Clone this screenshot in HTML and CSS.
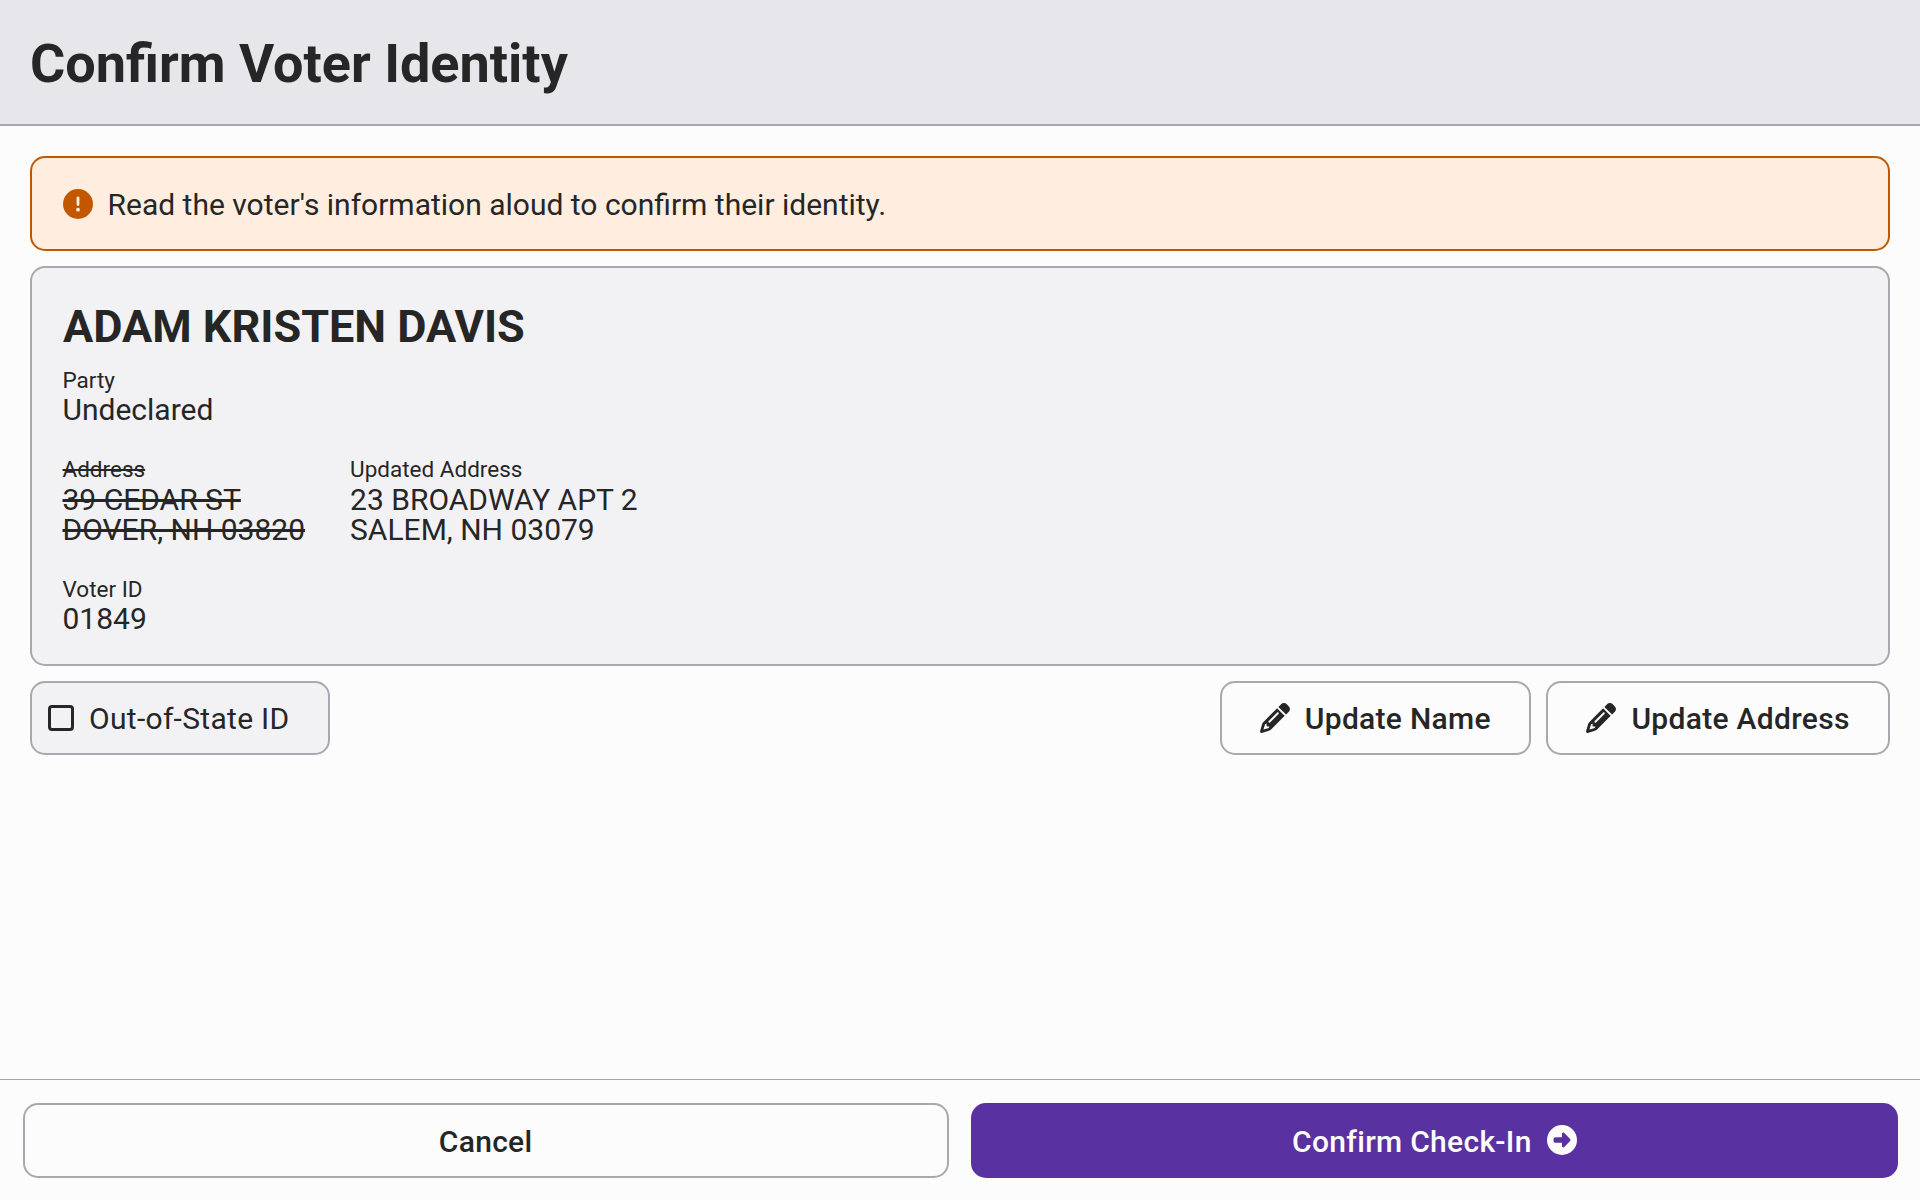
FILE: index.html
```html
<!DOCTYPE html>
<html lang="en">
<head>
<meta charset="utf-8">
<title>Confirm Voter Identity</title>
<link rel="stylesheet" href="styles.css">
</head>
<body>
<header class="header"><h1 class="title">Confirm Voter Identity</h1></header>
<main class="main">
  <div class="callout">
    <svg class="icon" viewBox="0 0 512 512"><path fill="currentColor" d="M256 512A256 256 0 1 0 256 0a256 256 0 1 0 0 512zm0-384c13.300 0 24 10.700 24 24V264c0 13.300-10.700 24-24 24s-24-10.700-24-24V152c0-13.300 10.700-24 24-24zM224 352a32 32 0 1 1 64 0 32 32 0 1 1-64 0z"/></svg>
    <span class="message">Read the voter's information aloud to confirm their identity.</span>
  </div>
  <section class="card">
    <h2 class="name">ADAM KRISTEN DAVIS</h2>
    <div class="details">
      <div class="field"><div class="label">Party</div><div>Undeclared</div></div>
      <div class="addresses">
        <div class="field"><div class="label"><s>Address</s></div><div><s>39 CEDAR ST</s></div><div><s>DOVER, NH 03820</s></div></div>
        <div class="field"><div class="label">Updated Address</div><div>23 BROADWAY APT 2</div><div>SALEM, NH 03079</div></div>
      </div>
      <div class="field"><div class="label">Voter ID</div><div>01849</div></div>
    </div>
  </section>
  <div class="actions">
    <button class="checkbox" role="checkbox" aria-checked="false"><span class="box"></span><span class="text">Out-of-State ID</span></button>
    <div class="updates">
      <button class="button"><svg class="icon" viewBox="0 0 512 512"><path fill="currentColor" d="M410.300 231l11.300-11.300-33.900-33.900-62.100-62.100L291.700 89.800l-11.300 11.300-22.600 22.600L58.600 322.900c-10.400 10.400-18 23.300-22.200 37.400L1 480.700c-2.500 8.400-.2 17.500 6.100 23.700s15.300 8.500 23.700 6.100l120.300-35.400c14.100-4.200 27-11.800 37.400-22.200L387.700 253.700 410.300 231zM160 399.400l-9.100 22.700c-4 3.100-8.500 5.400-13.300 6.900L59.400 452l23-78.100c1.400-4.900 3.800-9.400 6.900-13.300l22.700-9.100v32c0 8.800 7.200 16 16 16h32zM362.700 18.700L348.300 33.200 325.700 55.800 314.300 67.100l33.900 33.900 62.100 62.100 33.900 33.900 11.300-11.300 22.600-22.600 14.500-14.500c25-25 25-65.500 0-90.500L453.300 18.700c-25-25-65.500-25-90.500 0zm-47.400 168l-144 144c-6.200 6.200-16.400 6.200-22.600 0s-6.200-16.400 0-22.600l144-144c6.200-6.200 16.400-6.200 22.600 0s6.200 16.400 0 22.600z"/></svg><span class="text">Update Name</span></button>
      <button class="button"><svg class="icon" viewBox="0 0 512 512"><path fill="currentColor" d="M410.300 231l11.300-11.300-33.900-33.900-62.100-62.100L291.700 89.800l-11.300 11.300-22.600 22.600L58.600 322.900c-10.400 10.400-18 23.300-22.200 37.400L1 480.700c-2.500 8.400-.2 17.500 6.100 23.700s15.300 8.500 23.700 6.100l120.300-35.400c14.100-4.200 27-11.800 37.400-22.200L387.700 253.700 410.300 231zM160 399.400l-9.100 22.700c-4 3.100-8.500 5.400-13.300 6.900L59.400 452l23-78.100c1.400-4.900 3.800-9.400 6.900-13.300l22.700-9.100v32c0 8.800 7.200 16 16 16h32zM362.700 18.700L348.300 33.200 325.700 55.800 314.300 67.100l33.900 33.900 62.100 62.100 33.900 33.900 11.300-11.300 22.600-22.600 14.500-14.500c25-25 25-65.500 0-90.500L453.300 18.700c-25-25-65.500-25-90.500 0zm-47.400 168l-144 144c-6.200 6.200-16.400 6.200-22.600 0s-6.200-16.400 0-22.600l144-144c6.200-6.200 16.400-6.200 22.600 0s6.200 16.400 0 22.600z"/></svg><span class="text">Update Address</span></button>
    </div>
  </div>
</main>
<footer class="footer">
  <button class="button"><span class="text">Cancel</span></button>
  <button class="button primary"><span class="text">Confirm Check-In</span><svg class="icon" viewBox="0 0 512 512"><path fill="currentColor" fill-rule="evenodd" d="M0 256a256 256 0 1 0 512 0A256 256 0 1 0 0 256zM294.600 135.100l99.900 104.400c3.500 3.600 5.500 10.500 5.500 16.500s-2 12.900-5.500 16.500L294.600 376.900c-3.900 4.500-9.400 7.100-15.100 7.100-13 0-23.500-10.500-23.500-23.500V304H144c-17.700 0-32-14.300-32-32V240c0-17.700 14.300-32 32-32h112v-56.500c0-13 10.500-23.500 23.500-23.500 5.700 0 11.200 2.600 15.100 7.100z"/></svg></button>
</footer>
</body>
</html>
```
FILE: styles.css
```css
* { box-sizing: border-box; }
body { margin: 0; height: 100vh; display: flex; flex-direction: column; background: #fcfcfc; color: #262626; font: 400 30px/1 Roboto, sans-serif; }
.header { height: 126px; flex: none; display: flex; align-items: center; padding: 4px 30px 0; background: #e6e6eb; border-bottom: 2px solid #a8a8b0; }
.title { margin: 0; font-size: 54px; font-weight: 700; line-height: 1.2; }
.main { flex: 1; display: flex; flex-direction: column; gap: 15px; padding: 30px; }
.icon { width: 30px; height: 30px; flex: none; display: block; }
.callout { height: 95px; display: flex; align-items: center; gap: 14.5px; padding: 0 31px; border: 2px solid #c25700; border-radius: 15px; background: #ffeee0; }
.message, .text { padding-top: 2px; }
.callout .icon { color: #c25700; }
.card { height: 400px; padding: 31.5px 31px 0; border: 2px solid #a8a8b0; border-radius: 15px; background: #f2f2f5; }
.name { margin: 0 0 11px; font-size: 45px; font-weight: 700; line-height: 54px; }
.details { display: flex; flex-direction: column; gap: 29.6px; margin-left: -.5px; }
.addresses { display: flex; gap: 45px; margin-bottom: -.6px; }
.label { font-size: 22.5px; line-height: 30px; }
.addresses .label { margin-bottom: .6px; }
.actions { display: flex; justify-content: space-between; }
.updates { display: flex; gap: 15px; }
button { font: inherit; color: inherit; letter-spacing: .3px; }
.checkbox { height: 74px; width: 300px; display: flex; align-items: center; gap: 15px; padding: 0 16px; border: 2px solid #a8a8b0; border-radius: 15px; background: #f2f2f5; }
.box { width: 26px; height: 26px; border: 3px solid #262626; border-radius: 4px; }
.button { height: 74px; display: flex; align-items: center; justify-content: center; gap: 15px; padding: 0 38.3px; border: 2px solid #a8a8b0; border-radius: 15px; background: #fcfcfc; font-weight: 500; letter-spacing: .3px; }
.footer { height: 121px; flex: none; display: grid; grid-template-columns: 1fr 1fr; gap: 22.5px; padding: 22.5px; border-top: 1px solid #a8a8b0; }
.footer .button { height: 75px; }
.footer .text { padding-top: 3px; }
.primary { border-color: #5a31a0; background: #5a31a0; color: #fcfcfc; }
```
